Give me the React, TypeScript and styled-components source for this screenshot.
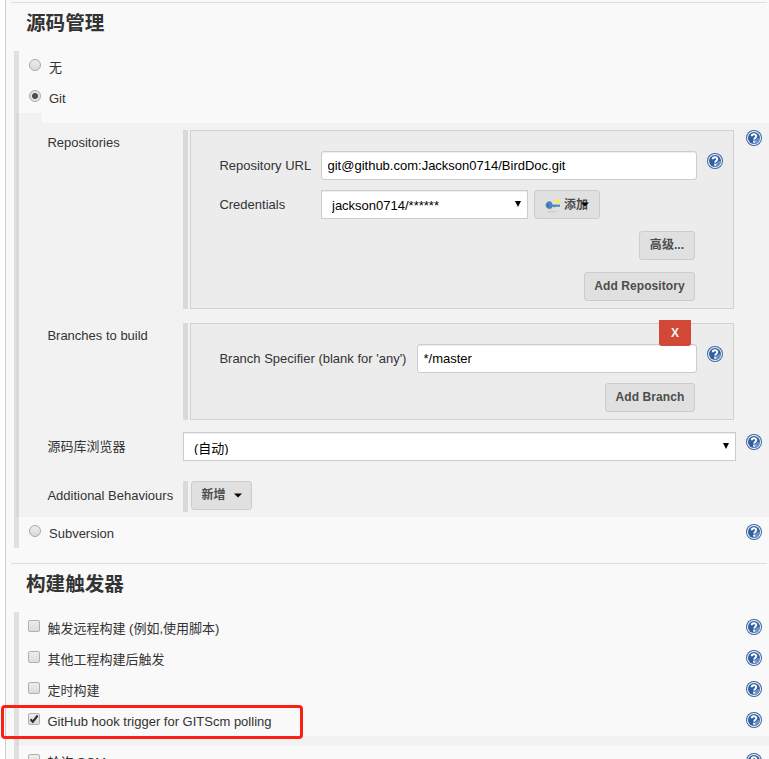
import React from "react";
import styled, { createGlobalStyle } from "styled-components";

const GlobalStyle = createGlobalStyle`
  * { box-sizing: border-box; }
  body {
    margin: 0;
    overflow: hidden;
    background: #fff;
    color: #333;
    font: 13px/16px "Liberation Sans", "Noto Sans CJK SC", sans-serif;
  }
`;

const Page = styled.div`
  position: relative;
  height: 759px;
  padding-left: 5px;
  overflow: hidden;
`;

const Panel = styled.main`
  height: 100%;
  padding-top: 2px;
  border-left: 1px solid #ccc;
  background: #f9f9f9;
  overflow: hidden;
`;

const Section = styled.section`
  margin-bottom: 15px;
`;

const SectionTitle = styled.h2`
  height: 49px;
  margin: 0 2px 0 5px;
  padding: 6px 0 0 15px;
  border-top: 1px solid #ddd;
  font-size: 19.6px;
  line-height: 29px;
  font-weight: 700;
`;

const SectionBody = styled.div`
  margin-left: 8px;
  border-left: 5px solid #e0e0e0;
`;

const HelpSvg = styled.svg`
  display: block;
  flex: none;
  width: 16px;
  height: 16px;
`;

const OptionRow = styled.div<{ $kind: "radio" | "checkbox" }>`
  display: flex;
  align-items: flex-start;
  height: 31px;
  padding: 8px 7px 0 ${(p) => (p.$kind === "radio" ? 10 : 9)}px;
  gap: ${(p) => (p.$kind === "radio" ? 8 : 7.5)}px;

  ${HelpSvg} { margin-top: -1px; }
`;

const OptionText = styled.span`
  flex: 1;
  line-height: 17px;
`;

const RadioDot = styled.span<{ $checked?: boolean }>`
  width: 12px;
  height: 12px;
  border: 1px solid #a8a8a8;
  border-radius: 50%;
  background: ${(p) =>
    p.$checked
      ? "radial-gradient(circle, #505050 0 2.6px, #e4e4e4 3.4px)"
      : "linear-gradient(#eee, #d9d9d9)"};
`;

const CheckSquare = styled.span`
  display: flex;
  width: 12px;
  height: 12px;
  border: 1px solid #b0b0b0;
  border-radius: 2px;
  background: linear-gradient(#ededed, #dcdcdc);

  svg { overflow: visible; }
`;

const Notch = styled.div`
  width: 26px;
  height: 10px;
  margin-left: -3px;
  background: rgba(0, 0, 0, 0.027);
`;

const Strip = styled.div`
  height: 10px;
  margin-left: -3px;
  background: rgba(0, 0, 0, 0.027);
`;

const GitSettings = styled.div`
  display: flex;
  flex-direction: column;
  height: 394px;
  margin-left: -3px;
  padding: 7px 7px 0 31px;
  background: rgba(0, 0, 0, 0.027);
`;

const Setting = styled.div<{ $gap?: number; $helpTop?: number }>`
  display: grid;
  grid-template-columns: 126px 553px 16px;
  column-gap: 10px;
  align-items: start;
  margin-bottom: ${(p) => p.$gap ?? 0}px;

  > ${HelpSvg} { margin-top: ${(p) => p.$helpTop ?? 0}px; }
`;

const SettingLabel = styled.label<{ $top: number }>`
  padding: ${(p) => p.$top}px 0 0 0.4px;
  white-space: nowrap;
`;

const Repeatable = styled.div`
  display: flex;
  border-left: 5px solid #d9d9d9;
`;

const Chunk = styled.div<{ $height: number }>`
  position: relative;
  width: 544px;
  height: ${(p) => p.$height}px;
  margin-left: 2px;
  padding: 20px 10px 0 28px;
  border: 1px solid #d2d2d2;
  background: #ececec;
`;

const Field = styled.div`
  display: flex;
  align-items: flex-start;
  height: 39px;

  > ${HelpSvg} { margin-top: 2px; }
`;

const FieldLabel = styled.label<{ $width: number }>`
  flex: none;
  width: ${(p) => p.$width}px;
  padding: 7px 0 0 0.4px;
  white-space: nowrap;
`;

const TextInput = styled.input`
  flex: 1;
  min-width: 0;
  height: 29px;
  margin-right: 10px;
  padding: 0 5px 0 5.5px;
  border: 1px solid #ccc;
  border-radius: 3px;
  outline: none;
  background: #fff;
  box-shadow: inset 0 1px 1px rgba(0, 0, 0, 0.075);
  color: #000;
  font: inherit;
`;

const SelectBox = styled.div<{ $width: number }>`
  display: flex;
  justify-content: space-between;
  width: ${(p) => p.$width}px;
  height: 29px;
  padding: 6px 5px 5px 10px;
  border: 1px solid #ccc;
  background: #fff;
  box-shadow: inset 0 1px 1px rgba(0, 0, 0, 0.075);
  color: #000;
`;

const SelectValue = styled.span<{ $shift: number }>`
  height: 16px;
  padding-top: ${(p) => p.$shift}px;
  overflow: hidden;
`;

const SelectArrow = styled.svg`
  width: 8px;
  height: 8px;
  margin-top: 3px;
`;

const Button = styled.button<{ $width: number }>`
  display: flex;
  align-items: center;
  justify-content: center;
  width: ${(p) => p.$width}px;
  height: 29px;
  padding: 0 0 1px;
  border: 1px solid #ccc;
  border-radius: 3px;
  background: #e0e0e0;
  color: #4d4d4d;
  font: bold 12px/16px "Liberation Sans", "Noto Sans CJK SC", sans-serif;
  letter-spacing: 0.08px;
  white-space: nowrap;
`;

const AddCredential = styled(Button)`
  justify-content: flex-start;
  margin-left: 6px;
  padding: 0 0 0 10px;
  letter-spacing: 0;

  span { margin: 0 -7px 0 3px; }
`;

const AddBehaviour = styled(Button)`
  gap: 8px;
  margin: 0 0 2px 3px;
`;

const Actions = styled.div<{ $bottom?: number; $top?: number }>`
  display: flex;
  justify-content: flex-end;
  margin: ${(p) => p.$top ?? 0}px 28px ${(p) => p.$bottom ?? 0}px 0;
`;

const DeleteButton = styled.button`
  position: absolute;
  top: -4px;
  right: 42px;
  width: 32px;
  height: 26px;
  padding: 0;
  border: 0;
  border-radius: 0 0 3px 3px;
  background: #d14836;
  color: #f5f5f5;
  font: bold 12px/24px "Liberation Sans", sans-serif;
`;

const Highlight = styled.div`
  position: absolute;
  left: 1px;
  top: 705px;
  width: 302px;
  height: 34px;
  border: 3px solid #fb2015;
  border-radius: 4px;
  pointer-events: none;
`;

const HelpIcon = () => (
  <HelpSvg viewBox="0 0 16 16" aria-label="Help">
    <circle cx="8" cy="8" r="8" fill="#3b65a0" />
    <circle cx="8" cy="8" r="7" fill="#f4f7fb" />
    <circle cx="8" cy="8" r="6" fill="#31609f" />
    <path d="M7.500 14A6 6 0 0 0 14 8C12 7.500 9 9 7.500 14Z" fill="#6d92c5" />
    <path
      d="M5.700 6.300C5.700 3.500 10.300 3.600 10.300 6.100C10.300 7.800 8.300 7.800 8.200 9.600"
      fill="none"
      stroke="#fff"
      strokeWidth="1.900"
    />
    <rect x="7.100" y="10.700" width="2.100" height="1.900" fill="#fff" />
  </HelpSvg>
);

const KeyIcon = () => (
  <svg width="16" height="16" viewBox="0 0 16 16">
    <ellipse cx="7.500" cy="14.600" rx="5.500" ry="0.900" fill="#cecece" />
    <path
      d="M4.500 4.200C2.300 4.200 .6 6 .6 8.100s1.700 3.900 3.800 3.900c1.500 0 2.600-.8 3-2.200h1l.8.700.8-.700h5V7H7.500C7 5.300 6 4.200 4.500 4.200Z"
      fill="#4e83bd"
    />
    <path d="M7.500 7.500h7.500" stroke="#9dbfe2" />
    <path d="M3 6.900v2.500" stroke="#2f639f" strokeWidth="1.300" />
    <path
      d="M12.500 1.500l1 1.800 1.800.9-1.800.9-1 1.800-1-1.800-1.800-.9 1.800-.9z"
      fill="#ffef3c"
      stroke="#fae96a"
    />
  </svg>
);

const Arrow = () => (
  <SelectArrow viewBox="0 0 8 8">
    <path d="M1 1h6L4 7z" fill="#000" />
  </SelectArrow>
);

const Caret = () => (
  <svg width="8" height="5" viewBox="0 0 8 5">
    <path d="M0 .5h8L4 4.500z" fill="#000" />
  </svg>
);

const Radio = ({ label, checked, help }: { label: string; checked?: boolean; help?: boolean }) => (
  <OptionRow $kind="radio">
    <RadioDot $checked={checked} role="radio" aria-checked={!!checked} />
    <OptionText>{label}</OptionText>
    {help && <HelpIcon />}
  </OptionRow>
);

const Checkbox = ({ label, checked }: { label: string; checked?: boolean }) => (
  <OptionRow $kind="checkbox">
    <CheckSquare role="checkbox" aria-checked={!!checked}>
      {checked && (
        <svg width="10" height="10" viewBox="0 0 10 10">
          <path d="M1.500 5.200L3.800 7.800L8.700 1.500" fill="none" stroke="#333" strokeWidth="2.200" />
        </svg>
      )}
    </CheckSquare>
    <OptionText>{label}</OptionText>
    <HelpIcon />
  </OptionRow>
);

export default function App() {
  return (
    <Page>
      <GlobalStyle />
      <Panel>
        <Section>
          <SectionTitle>源码管理</SectionTitle>
          <SectionBody>
            <Radio label="无" />
            <Radio label="Git" checked />
            <Notch />
            <GitSettings>
              <Setting $gap={14}>
                <SettingLabel $top={5}>Repositories</SettingLabel>
                <Repeatable>
                  <Chunk $height={179}>
                    <Field>
                      <FieldLabel $width={102}>Repository URL</FieldLabel>
                      <TextInput defaultValue="git@github.com:Jackson0714/BirdDoc.git" />
                      <HelpIcon />
                    </Field>
                    <Field>
                      <FieldLabel $width={102}>Credentials</FieldLabel>
                      <SelectBox $width={207}>
                        <SelectValue $shift={1}>jackson0714/******</SelectValue>
                        <Arrow />
                      </SelectBox>
                      <AddCredential $width={66}>
                        <KeyIcon />
                        <span>添加</span>
                        <Caret />
                      </AddCredential>
                    </Field>
                    <Actions $top={2} $bottom={12}>
                      <Button $width={56}>高级...</Button>
                    </Actions>
                    <Actions>
                      <Button $width={111}>Add Repository</Button>
                    </Actions>
                  </Chunk>
                </Repeatable>
                <HelpIcon />
              </Setting>
              <Setting $gap={12}>
                <SettingLabel $top={5}>Branches to build</SettingLabel>
                <Repeatable>
                  <Chunk $height={97}>
                    <Field>
                      <FieldLabel $width={198}>Branch Specifier (blank for 'any')</FieldLabel>
                      <TextInput defaultValue="*/master" />
                      <HelpIcon />
                    </Field>
                    <Actions>
                      <Button $width={90}>Add Branch</Button>
                    </Actions>
                    <DeleteButton>X</DeleteButton>
                  </Chunk>
                </Repeatable>
              </Setting>
              <Setting $gap={20} $helpTop={2}>
                <SettingLabel $top={7}>源码库浏览器</SettingLabel>
                <SelectBox $width={553}>
                  <SelectValue $shift={2}>(自动)</SelectValue>
                  <Arrow />
                </SelectBox>
                <HelpIcon />
              </Setting>
              <Setting>
                <SettingLabel $top={7}>Additional Behaviours</SettingLabel>
                <Repeatable>
                  <AddBehaviour $width={61}>
                    新增
                    <Caret />
                  </AddBehaviour>
                </Repeatable>
              </Setting>
            </GitSettings>
            <Radio label="Subversion" help />
          </SectionBody>
        </Section>
        <Section>
          <SectionTitle>构建触发器</SectionTitle>
          <SectionBody>
            <Checkbox label="触发远程构建 (例如,使用脚本)" />
            <Checkbox label="其他工程构建后触发" />
            <Checkbox label="定时构建" />
            <Checkbox label="GitHub hook trigger for GITScm polling" checked />
            <Strip />
            <Checkbox label="轮询 SCM" />
          </SectionBody>
        </Section>
      </Panel>
      <Highlight />
    </Page>
  );
}
